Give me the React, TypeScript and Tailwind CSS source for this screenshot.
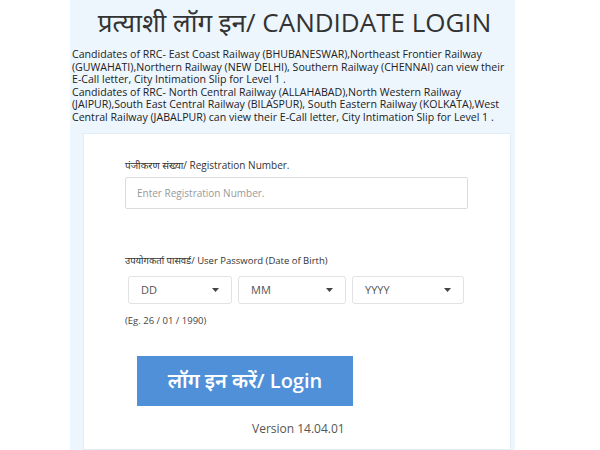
function Caret() {
    return (
        <svg width="7" height="4" viewBox="0 0 7 4" className="text-[#444]">
            <path d="M0 0 L7 0 L3.5 4 Z" fill="currentColor" />
        </svg>
    );
}

function DateSelect({ label, width }: { label: string; width: string }) {
    return (
        <div className={`${width} h-[28px] border border-[#e2e2e2] rounded-[3px] bg-white flex items-center justify-between pl-[12px] pr-[12px] text-[11px] text-[#555]`}>
            <span>{label}</span>
            <Caret />
        </div>
    );
}

export default function App() {
    return (
        <div className="w-full h-[450px] bg-white overflow-hidden font-['Open_Sans','Noto_Sans',sans-serif]">
            <div className="ml-[70px] w-[445px] h-[450px] bg-[#eef6fd] flex flex-col">
                <h1 className="text-center text-[26px] leading-[40px] text-[#333] pt-[2px] pl-[4px]">
                    प्रत्याशी लॉग इन/ CANDIDATE LOGIN
                </h1>
                <div className="mt-[6px] pl-[2px] text-[10.6px] leading-[12.5px] text-[#222]">
                    <p>
                        Candidates of RRC- East Coast Railway (BHUBANESWAR),Northeast Frontier Railway (GUWAHATI),Northern Railway (NEW DELHI), Southern Railway (CHENNAI) can view their E-Call letter, City Intimation Slip for Level 1 .
                    </p>
                    <p>
                        Candidates of RRC- North Central Railway (ALLAHABAD),North Western Railway (JAIPUR),South East Central Railway (BILASPUR), South Eastern Railway (KOLKATA),West Central Railway (JABALPUR) can view their E-Call letter, City Intimation Slip for Level 1 .
                    </p>
                </div>
                <div className="mt-[10px] ml-[13px] mr-[4px] flex-1 bg-white border border-[#e3edf6] pl-[41px] pt-[24px]">
                    <label className="block text-[10px] leading-[14px] text-[#333]">पंजीकरण संख्या/ Registration Number.</label>
                    <div className="mt-[5px] w-[343px] h-[32px] border border-[#dcdcdc] rounded-[2px] flex items-center pl-[11px] text-[10px] text-[#999]">
                        Enter Registration Number.
                    </div>
                    <label className="block mt-[45px] text-[9.5px] leading-[14px] text-[#333]">
                        उपयोगकर्ता पासवर्ड/ User Password (Date of Birth)
                    </label>
                    <div className="mt-[8px] ml-[3px] flex gap-[6px]">
                        <DateSelect label="DD" width="w-[104px]" />
                        <DateSelect label="MM" width="w-[108px]" />
                        <DateSelect label="YYYY" width="w-[112px]" />
                    </div>
                    <div className="mt-[10px] text-[9.5px] leading-[14px] text-[#444]">(Eg. 26 / 01 / 1990)</div>
                    <button className="mt-[28px] ml-[12px] w-[216px] h-[50px] bg-[#4f90d9] text-white text-[20px] font-semibold flex items-center justify-center">
                        लॉग इन करें/ Login
                    </button>
                    <div className="mt-[14px] ml-[127px] text-[12px] text-[#555]">Version 14.04.01</div>
                </div>
            </div>
        </div>
    );
}
